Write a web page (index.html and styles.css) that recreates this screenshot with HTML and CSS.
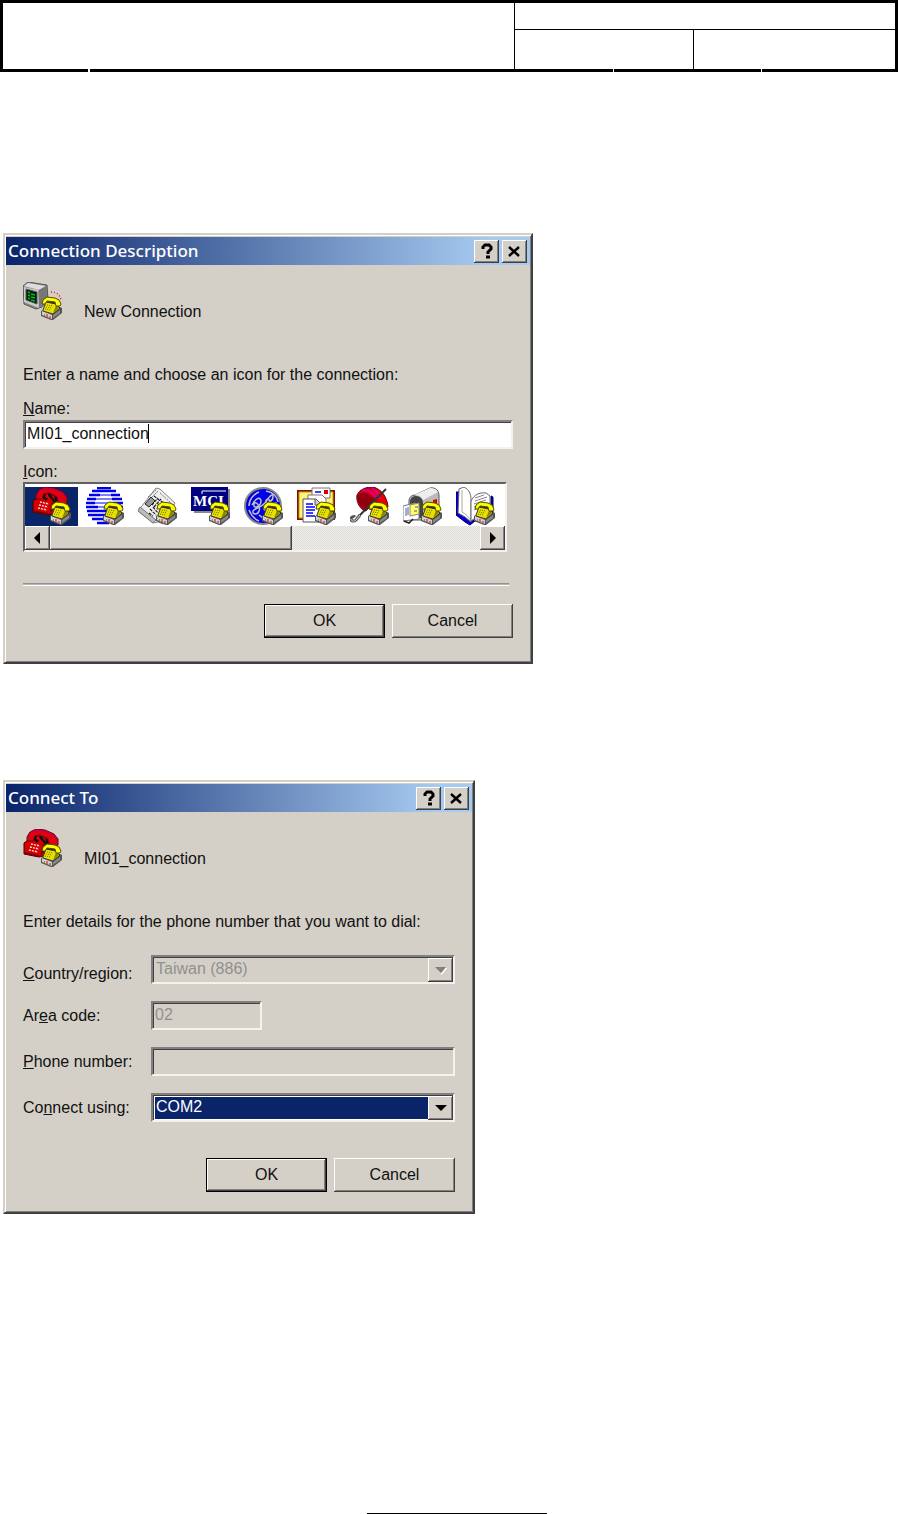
FILE: index.html
```html
<!DOCTYPE html>
<html lang="en">
<head>
<meta charset="utf-8">
<meta name="viewport" content="width=device-width, initial-scale=1">
<title>Connection Description</title>
<link rel="stylesheet" href="styles.css">
</head>
<body>
<svg class="sprite" aria-hidden="true">
  <defs>
    <symbol id="mini-phone" viewBox="0 0 39 39">
      <path d="M18 29l4-2 15-2 2 1v5l-9 7h-2l-10-4z" fill="#555"/>
      <path d="M19 29l4-2 13-1-7 6z" fill="#eee"/>
      <path d="M19 29l10 4v4l-10-4z" fill="#d0d0d0"/>
      <path d="M30 33l7-5v3l-7 5z" fill="#888"/>
      <path d="M24 32v3M26 35h2" stroke="#e00" stroke-width="1"/>
      <path d="M21 33h1" stroke="#080" stroke-width="1"/>
      <path d="M20 28l3-8 10 2 4 4-7 6-10-3z" fill="#e8e000" stroke="#333" stroke-width="1"/>
      <path d="M30 31l6-5-2-5z" fill="#8a8600"/>
      <path d="M23 20l2-2 8 1v3z" fill="#333"/>
      <path d="M19 22l1-4 4-3 8 1 4 2 2 4-1 2-4 0-1-4-8-1-2 3z" fill="#ff0" stroke="#504d00" stroke-width="1"/>
      <path d="M24 23l6 1M23 25l6 1M22 27l6 1" stroke="#777300" stroke-width="1" stroke-dasharray="1 1"/>
    </symbol>
    <symbol id="red-phone" viewBox="0 0 39 39">
      <path d="M1 14l7-5 16 1 6 8-10 9-4 1-15-3z" fill="#d40000" stroke="#400" stroke-width="1"/>
      <path d="M17 27l10-9-2-7-5 4z" fill="#800010"/>
      <path d="M1 23l15 3v2L1 25z" fill="#800000"/>
      <path d="M9 9l4-4 12 4 1 5-4 1-5-5-3 4z" fill="#111"/>
      <path d="M13 10l2-4 3 6zM19 8l3 1 1 4z" fill="#f00000"/>
      <path d="M4 8l3-5 6-3 9 1 9 4 4 5 0 6-5 2-4-3-1-5-8-4-5 1-2 5-6 0z" fill="#e00010" stroke="#700018" stroke-width="1"/>
      <path d="M8 3l5-2 9 1 9 4 2 5" fill="none" stroke="#b00060" stroke-width="1"/>
      <path d="M8 15l9 2M7 18l9 2M6 21l9 2" stroke="#ffd8d8" stroke-width="1.4" stroke-dasharray="2 1"/>
      <use href="#mini-phone" width="39" height="39"/>
    </symbol>
    <symbol id="computer" viewBox="0 0 39 39">
      <path d="M0 4l5-4 19 3 1 14-6 8-6 2-12-5z" fill="#888" stroke="#555" stroke-width="1"/>
      <path d="M1 4l4-3 18 3-7 4z" fill="#ddd"/>
      <path d="M16 8l7-4 1 13-8 8z" fill="#777"/>
      <path d="M1 5l14 3 1 18L1 20z" fill="#ccc"/>
      <path d="M3 7l11 3v12L3 18z" fill="#001c08" stroke="#555" stroke-width="1"/>
      <path d="M5 10l2 1M8 12l4 1M5 13l2 1M8 15l4 1M5 16l2 1M8 18l4 1" stroke="#00c020" stroke-width="1.4"/>
      <path d="M28 10c6 0 10 4 10 9" fill="none" stroke="#f00" stroke-width="1.3" stroke-dasharray="1 2"/>
      <use href="#mini-phone" width="39" height="39"/>
    </symbol>
    <symbol id="globe-lines" viewBox="0 0 39 39">
      <path d="M12 1h14M7 4h24M4 8h11M26 8h9M2 12h9M27 12h10M1 16h9M28 16h10M1 20h12M25 20h13M2 24h34M3 28h29M7 32h20M12 36h12" stroke="#0000f0" stroke-width="2.4"/>
      <path d="M15 8h11M11 12h16M10 16h18M13 20h12" stroke="#0000f0" stroke-width="1"/>
      <use href="#mini-phone" width="39" height="39"/>
    </symbol>
    <symbol id="newspaper" viewBox="0 0 39 39">
      <path d="M0 24L18 1l4 1 15 14-12 21-5-2-5 1z" fill="#eee" stroke="#888" stroke-width="1"/>
      <path d="M0 24l15 12 3-3L2 20z" fill="#bbb" stroke="#777" stroke-width="1"/>
      <path d="M10 10l9-8M12 12l8-8M22 6l11 10" stroke="#777" stroke-width="1" stroke-dasharray="2 1"/>
      <path d="M7 17l6-7 4 4-6 6z" fill="#999" stroke="#222" stroke-width="1"/>
      <path d="M16 9l5 4M14 18l6-7M16 20l7-8M12 22l6 6M15 20l5 6M20 17l4 4M23 14l5 4M11 26l4 3" stroke="#222" stroke-width="1.2" stroke-dasharray="3 1"/>
      <use href="#mini-phone" width="39" height="39"/>
    </symbol>
    <symbol id="mci" viewBox="0 0 39 39">
      <path d="M3 2h36v24H3z" fill="#888"/>
      <path d="M0 0h37v24H0z" fill="#000080"/>
      <path d="M11 7V4h24" fill="none" stroke="#fff" stroke-width="1"/>
      <text x="2" y="19" class="mci-text">MCI</text>
      <use href="#mini-phone" width="39" height="39"/>
    </symbol>
    <symbol id="ge-globe" viewBox="0 0 39 39">
      <circle cx="19" cy="19" r="18" fill="#0000e8" stroke="#888" stroke-width="2"/>
      <path d="M5 19c0-7 5-12 10-14M22 4c6 1 11 5 12 11M5 23c2 5 5 9 10 11M8 18c4-8 9-8 9-4 0 5-8 9-7 3 1-4 7 2 5 7-1 4-7 4-6 0 1-3 8-3 12-8 4-6 8-11 8-6 0 4-7 8-7 4 0-3 6-2 4 4-1 4-7 7-6 3 1-2 7-5 13-5M15 28c2 2 4 3 7 4" fill="none" stroke="#c0c0c0" stroke-width="1.5"/>
      <use href="#mini-phone" width="39" height="39"/>
    </symbol>
    <symbol id="documents" viewBox="0 0 39 39">
      <path d="M0 3h38v30H0z" fill="#801000"/>
      <path d="M2 5h34v26H2z" fill="#fff080" stroke="#c0a000" stroke-width="1"/>
      <path d="M15 1h18v10H15z" fill="#fff" stroke="#777" stroke-width="1"/>
      <path d="M18 5h6" stroke="#00f" stroke-width="1.5"/><path d="M27 3h4v4h-4z" fill="#d00"/>
      <path d="M11 8h14l4 4v18H11z" fill="#fff" stroke="#777" stroke-width="1"/>
      <path d="M6 12h13l5 5v18H6z" fill="#fff" stroke="#555" stroke-width="1"/>
      <path d="M18 12v6h6" fill="#ccc" stroke="#555" stroke-width="1"/>
      <path d="M9 17h7M9 20h9M9 23h9M9 26h7M9 29h9" stroke="#00f" stroke-width="1.3"/>
      <use href="#mini-phone" width="39" height="39"/>
    </symbol>
    <symbol id="umbrella" viewBox="0 0 39 39">
      <path d="M7 8c3-6 9-8 16-8 8 2 14 9 15 20l-6 2-7-9-9 11-3-1C9 20 6 14 7 8z" fill="#d00010" stroke="#600" stroke-width="1"/>
      <path d="M7 9c3-3 6-4 9-3l9 6-10 10c-5-2-8-8-8-13z" fill="#900010"/>
      <path d="M16 21l9-8 8 9-7 3z" fill="#c00010"/>
      <path d="M17 5l9 6 11 9c0-7-4-14-11-18z" fill="#f00000"/>
      <path d="M12 3l8 1 6 6M22 1c5 3 7 7 8 11" fill="none" stroke="#d000a0" stroke-width="2"/>
      <path d="M36 2L8 30" stroke="#333" stroke-width="2"/>
      <path d="M10 28l-4 5c-2 2-5 1-5-1s3-3 4-2" fill="none" stroke="#555" stroke-width="3"/>
      <path d="M10 28l-4 5c-2 2-5 1-5-1" fill="none" stroke="#ddd" stroke-width="1"/>
      <use href="#mini-phone" width="39" height="39"/>
    </symbol>
    <symbol id="mailbox" viewBox="0 0 39 39">
      <path d="M6 14c0-4 3-6 6-6L27 1c6-1 9 3 9 8v15l-14 9H6z" fill="#bbb" stroke="#555" stroke-width="1"/>
      <path d="M11 8L27 1c4 0 6 1 8 4l-15 8c-2-4-5-5-9-5z" fill="#eee"/>
      <path d="M7 15c0-4 3-6 6-6 4 0 7 3 7 7v15H7z" fill="#444"/>
      <path d="M30 13l4-1v7l-4 2z" fill="#e00000"/>
      <path d="M0 19l12-3 4 3v13L0 34z" fill="#fff" stroke="#777" stroke-width="1"/>
      <path d="M7 18l9-2v11l-9 2z" fill="#ff6" stroke="#888" stroke-width="1"/>
      <path d="M3 21v8M5 20v8M12 20h3M11 24h3" stroke="#55a" stroke-width="1"/>
      <path d="M1 34l5 2 4-4" fill="none" stroke="#222" stroke-width="1.5"/>
      <use href="#mini-phone" width="39" height="39"/>
    </symbol>
    <symbol id="open-book" viewBox="0 0 39 39">
      <path d="M0 5h3l10 29 7-3 15-4V9l2 1v21l-18 3-5 4-5-3-9-7z" fill="#0000d0" stroke="#000060" stroke-width="1"/>
      <path d="M3 2l5-2c5 3 7 6 7 13v22L9 30l-7-4z" fill="#fff" stroke="#666" stroke-width="1"/>
      <path d="M6 3v22c4 2 7 5 9 9" fill="none" stroke="#aaa" stroke-width="1"/>
      <path d="M15 34V14c3-6 8-9 15-8l4 3v21c-8-1-14 0-19 4z" fill="#fff" stroke="#666" stroke-width="1"/>
      <path d="M19 11l9-3M19 14l12-4M18 17l12-4M18 20l8-3M18 23l4-2" stroke="#888" stroke-width="1"/>
      <use href="#mini-phone" width="39" height="39"/>
    </symbol>
  </defs>
</svg>

<header class="doc-header">
  <div class="doc-cell doc-cell-main"></div>
  <div class="doc-cell doc-cell-top"></div>
  <div class="doc-cell doc-cell-left"></div>
  <div class="doc-cell"></div>
  <span class="notch notch-a"></span>
  <span class="notch notch-b"></span>
  <span class="notch notch-c"></span>
</header>

<main class="doc-body">
  <section class="dialog dialog-wide">
    <div class="titlebar">
      <h1 class="title">Connection Description</h1>
      <button class="title-button" type="button" aria-label="Help"><svg width="14" height="17" viewBox="0 0 14 17"><path d="M3 6V4l2-2h4l2 2v2L8 9v2M6 14h4" fill="none" stroke="#000" stroke-width="3"/></svg></button>
      <button class="title-button" type="button" aria-label="Close"><svg width="13" height="17" viewBox="0 0 13 17"><path d="M1 4l10 9M11 4l-10 9" stroke="#000" stroke-width="2.4"/></svg></button>
    </div>
    <form class="content">
      <div class="intro">
        <svg class="icon"><use href="#computer"/></svg>
        <span>New Connection</span>
      </div>
      <p class="prompt">Enter a name and choose an icon for the connection:</p>
      <label class="label name-label" for="name"><u>N</u>ame:</label>
      <div class="text-wrap">
        <input class="field" id="name" type="text" value="MI01_connection">
        <span class="caret"></span>
      </div>
      <div class="label icon-label" id="icon-label"><u>I</u>con:</div>
      <div class="icon-list">
        <div class="icon-row" role="group" aria-labelledby="icon-label">
          <button class="choice selected" type="button" aria-label="Red phone"><svg class="icon"><use href="#red-phone"/></svg></button>
          <button class="choice" type="button" aria-label="Striped globe"><svg class="icon"><use href="#globe-lines"/></svg></button>
          <button class="choice" type="button" aria-label="Newspaper"><svg class="icon"><use href="#newspaper"/></svg></button>
          <button class="choice" type="button" aria-label="MCI"><svg class="icon"><use href="#mci"/></svg></button>
          <button class="choice" type="button" aria-label="Blue emblem"><svg class="icon"><use href="#ge-globe"/></svg></button>
          <button class="choice" type="button" aria-label="Documents"><svg class="icon"><use href="#documents"/></svg></button>
          <button class="choice" type="button" aria-label="Umbrella"><svg class="icon"><use href="#umbrella"/></svg></button>
          <button class="choice" type="button" aria-label="Mailbox"><svg class="icon"><use href="#mailbox"/></svg></button>
          <button class="choice" type="button" aria-label="Book"><svg class="icon"><use href="#open-book"/></svg></button>
        </div>
        <div class="scrollbar">
          <button class="scroll-button" type="button" aria-label="Scroll left"><svg width="8" height="12" viewBox="0 0 8 12"><path d="M6 0v12L0 6z"/></svg></button>
          <div class="thumb"></div>
          <div class="track"></div>
          <button class="scroll-button" type="button" aria-label="Scroll right"><svg width="8" height="12" viewBox="0 0 8 12"><path d="M1 0v12l6-6z"/></svg></button>
        </div>
      </div>
      <hr class="divider">
      <div class="actions">
        <button class="button default" type="button">OK</button>
        <button class="button" type="button">Cancel</button>
      </div>
    </form>
  </section>

  <section class="dialog dialog-narrow">
    <div class="titlebar">
      <h2 class="title">Connect To</h2>
      <button class="title-button" type="button" aria-label="Help"><svg width="14" height="17" viewBox="0 0 14 17"><path d="M3 6V4l2-2h4l2 2v2L8 9v2M6 14h4" fill="none" stroke="#000" stroke-width="3"/></svg></button>
      <button class="title-button" type="button" aria-label="Close"><svg width="13" height="17" viewBox="0 0 13 17"><path d="M1 4l10 9M11 4l-10 9" stroke="#000" stroke-width="2.4"/></svg></button>
    </div>
    <form class="content content-narrow">
      <div class="intro">
        <svg class="icon"><use href="#red-phone"/></svg>
        <span>MI01_connection</span>
      </div>
      <p class="prompt">Enter details for the phone number that you want to dial:</p>
      <div class="rows">
        <label class="label label-low" for="country"><u>C</u>ountry/region:</label>
        <div class="combo">
          <select class="field select" id="country" disabled><option>Taiwan (886)</option></select>
          <span class="drop"><svg width="14" height="9" viewBox="0 0 14 9"><path d="M7 8l5-6h1L8 8z" fill="#fff" stroke="#fff"/><path d="M1 1h11L7 7z" fill="#808080"/></svg></span>
        </div>
        <label class="label" for="area">Ar<u>e</u>a code:</label>
        <input class="field field-short" id="area" type="text" value="02" disabled>
        <label class="label" for="phone"><u>P</u>hone number:</label>
        <input class="field" id="phone" type="text" disabled>
        <label class="label" for="port">Co<u>n</u>nect using:</label>
        <div class="combo">
          <select class="field select highlighted" id="port"><option>COM2</option></select>
          <span class="drop"><svg width="14" height="9" viewBox="0 0 14 9"><path d="M1 1h12L7 7z"/></svg></span>
        </div>
      </div>
      <div class="actions actions-low">
        <button class="button default" type="button">OK</button>
        <button class="button" type="button">Cancel</button>
      </div>
    </form>
  </section>
</main>

<footer class="doc-footer"><hr class="foot-rule"></footer>
</body>
</html>
```
FILE: styles.css
```css
* { box-sizing: border-box; }

body {
  margin: 0;
  min-height: 100vh;
  display: flex;
  flex-direction: column;
  background: #fff;
  color: #111;
  font: 16px/20px "Liberation Sans", Arial, sans-serif;
}

button, input, select {
  font: inherit;
  color: inherit;
  margin: 0;
  padding: 0;
  border: 0;
  border-radius: 0;
}

svg { display: block; }
.sprite { position: absolute; width: 0; height: 0; }
.mci-text { font: bold 15px "Liberation Serif", serif; fill: #fff; }

/* Document header grid */
.doc-header {
  position: relative;
  display: grid;
  grid-template-columns: 511fr 180fr 201fr;
  grid-template-rows: 27px 39px;
  border: 3px solid #000;
}
.doc-cell-main { grid-row: 1 / 3; }
.doc-cell-top {
  grid-column: 2 / 4;
  border-left: 1px solid #000;
  border-bottom: 1px solid #000;
}
.doc-cell-left {
  border-left: 1px solid #000;
  border-right: 1px solid #000;
}
.notch {
  position: absolute;
  bottom: -3px;
  width: 1px;
  height: 3px;
  background: #fff;
}
.notch-a { left: 85px; width: 2px; }
.notch-b { right: 281px; }
.notch-c { right: 133px; }

.doc-body {
  display: flex;
  flex-direction: column;
  gap: 116px;
  padding: 161px 3px 0;
}

/* Dialog windows */
.dialog {
  max-width: 100%;
  padding: 2px 1px 0 1px;
  background: #d4d0c8;
  border: 2px solid #404040;
  border-color: #d4d0c8 #404040 #404040 #d4d0c8;
  box-shadow: inset 1px 1px #fff, inset -1px -1px #808080;
}
.dialog-wide { width: 530px; }
.dialog-narrow { width: 472px; }

.titlebar {
  display: flex;
  align-items: center;
  gap: 3px;
  height: 28px;
  padding: 0 3px 0 2px;
  background: linear-gradient(to right, #0a246a, #a6caf0 92%);
}
.title {
  flex: 1;
  margin: 0;
  color: #fff;
  font: 500 17px/28px "Noto Sans", sans-serif;
}
.title-button,
.scroll-button,
.drop {
  display: flex;
  align-items: center;
  justify-content: center;
  background: #d4d0c8;
  box-shadow: inset -1px -1px #404040, inset 1px 1px #fff, inset -2px -2px #808080;
}
.title-button { width: 25px; height: 23px; }

.content { padding: 17px 17px 24px 17px; }
.content-narrow { padding-bottom: 20px; }

.intro {
  display: flex;
  align-items: flex-end;
  gap: 22px;
  height: 40px;
}
.icon { width: 39px; height: 39px; }
.intro .icon { align-self: flex-start; }

.prompt { margin: 43px 0 0; }
.label { display: block; }
.name-label { margin: 14px 0 1px; }
.icon-label { margin: 13px 0 0; }

.field {
  display: block;
  width: 100%;
  height: 29px;
  padding: 0 2px 2px;
  border: 2px solid #fff;
  border-color: #808080 #f4f2ee #f4f2ee #808080;
  background: #fff;
  box-shadow: inset 1px 1px #404040;
  appearance: none;
  outline: 0;
}
.field:disabled {
  background: #d4d0c8;
  color: #909090;
  opacity: 1;
}
.field-short { width: 111px; }

.text-wrap { position: relative; }
.caret {
  position: absolute;
  left: 125px;
  top: 4px;
  width: 1px;
  height: 19px;
  background: #000;
}

/* Icon picker */
.icon-list {
  margin-right: 6px;
  border: 2px solid #f4f2ee;
  border-color: #606060 #f4f2ee #f4f2ee #606060;
  background: #fff;
}
.icon-row { display: flex; padding-top: 3px; overflow: hidden; }
.choice {
  flex: 0 0 53px;
  display: flex;
  justify-content: center;
  height: 39px;
  background: #fff;
}
.selected { background: #0a246a; }

.scrollbar { display: flex; height: 24px; }
.scroll-button { width: 25px; }
.thumb {
  flex: 0 0 242px;
  background: #d4d0c8;
  box-shadow: inset -1px -1px #404040, inset 1px 1px #fff, inset -2px -2px #808080;
}
.track {
  flex: 1;
  background: repeating-conic-gradient(#f0efec 0 25%, #dedbd5 0 50%) 0 0 / 2px 2px;
}

.divider {
  height: 3px;
  margin: 31px 4px 0 0;
  border: 0;
  background: linear-gradient(#909090 0 1px, #b8b5ae 1px 2px, #fff 2px);
}

.actions {
  display: flex;
  justify-content: flex-end;
  gap: 7px;
  margin-top: 18px;
}
.actions-low { margin-top: 36px; }
.button {
  width: 121px;
  height: 34px;
  background: #d4d0c8;
  box-shadow: inset -1px -1px #404040, inset 1px 1px #fff, inset -2px -2px #808080;
}
.default {
  border: 1px solid #000;
  box-shadow: inset -1px -1px #404040, inset 1px 1px #fff, inset -2px -2px #808080;
}

/* Dialling form */
.rows {
  display: grid;
  grid-template-columns: 128px 1fr;
  row-gap: 17px;
  align-items: center;
  margin-top: 23px;
}
.label-low { align-self: end; }
.combo { position: relative; }
.select { padding: 0 28px 1px 3px; }
.highlighted {
  color: #fff;
  background: #0a246a;
  box-shadow: inset 1px 1px #404040, inset 2px 2px #fff, inset -1px -1px #fff;
}
.drop {
  position: absolute;
  top: 3px;
  right: 2px;
  bottom: 2px;
  width: 25px;
  pointer-events: none;
}

.doc-footer { margin-top: auto; padding-left: 16px; }
.foot-rule {
  width: 180px;
  height: 1px;
  margin: 0 auto;
  border: 0;
  background: #000;
}
```
